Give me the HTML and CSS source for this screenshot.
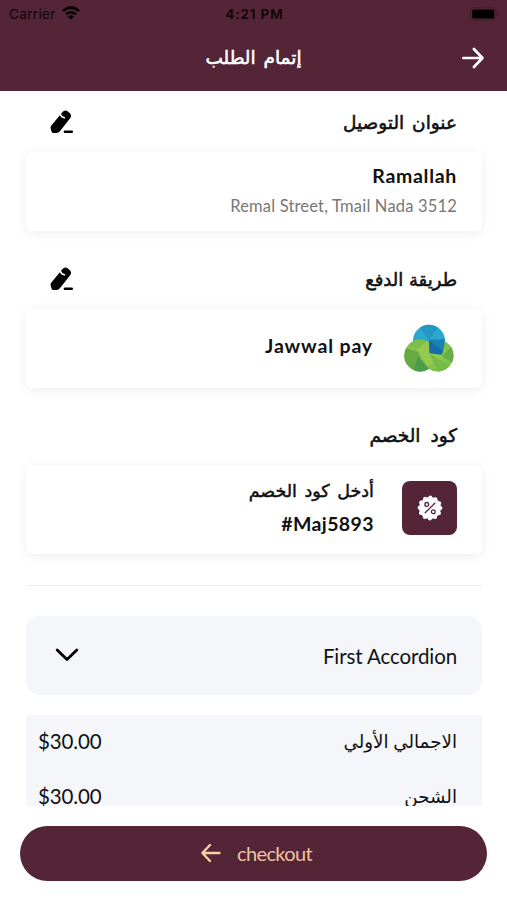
FILE: index.html
```html
<!DOCTYPE html>
<html lang="ar" dir="rtl">
<head>
<meta charset="utf-8">
<title>إتمام الطلب</title>
<link rel="stylesheet" href="styles.css">
</head>
<body>
<div class="screen">
  <header class="header">
    <div class="status" dir="ltr">
      <div class="carrier"><span>Carrier</span>
        <svg width="18" height="14" viewBox="0 0 18 14"><g fill="none" stroke="#000" stroke-width="2.6"><path d="M1 5.1C5.5.5 12.5.5 17 5.1"/><path d="M4 8.4C6.8 5.5 11.2 5.5 14 8.4"/></g><path d="M9 13.6 5.9 10.4Q9 7.9 12.1 10.4Z"/></svg>
      </div>
      <div class="clock">4:21 PM</div>
      <div class="power"><svg width="30" height="14" viewBox="0 0 30 14"><rect x=".5" y=".7" width="25.5" height="12.3" rx="3" fill="none" stroke="#000" stroke-opacity=".2"/><rect x="2.2" y="2.4" width="22" height="9" rx="1.5"/><path d="M27.3 5v4q1.5-.5 1.5-2t-1.5-2Z" fill-opacity=".25"/></svg></div>
    </div>
    <div class="navbar">
      <svg class="forward" width="24" height="24" viewBox="0 0 24 24"><path d="M2.400 12H21.500M12.900 3 21.500 12l-8.600 9" fill="none" stroke="#fff" stroke-width="2.700" stroke-linecap="round" stroke-linejoin="round"/></svg>
      <h1>إتمام الطلب</h1>
      <span class="balance"></span>
    </div>
  </header>
  <main class="content">
    <section>
      <div class="heading"><h2 class="t-address">عنوان التوصيل</h2>
        <svg width="24" height="24" viewBox="0 0 24 24"><path d="M1.400 15.500 12.300 2.200Q14.800-.7 17.900 1.400L19.900 3.200Q22 5.400 20.300 7.900L10.300 20.800Q8.500 23.200 5.900 23L3.200 23.100Q1.600 23 1.300 20.800L.6 18.200Q.4 16.700 1.400 15.500Z"/><path d="M10.300 4.300Q11.300 7.300 14.400 7.800" fill="none" stroke="#fff" stroke-width="1.600" stroke-linecap="round"/><path d="M14.900 21.700h6.900" stroke="#000" stroke-width="2.500" stroke-linecap="round"/></svg>
      </div>
      <div class="card address"><strong class="city">Ramallah</strong><span>Remal Street, Tmail Nada 3512</span></div>
    </section>
    <section>
      <div class="heading"><h2 class="t-payment">طريقة الدفع</h2>
        <svg width="24" height="24" viewBox="0 0 24 24"><path d="M1.400 15.500 12.300 2.200Q14.800-.7 17.900 1.400L19.900 3.200Q22 5.400 20.300 7.900L10.300 20.800Q8.500 23.200 5.900 23L3.200 23.100Q1.600 23 1.300 20.800L.6 18.200Q.4 16.700 1.400 15.500Z"/><path d="M10.300 4.300Q11.300 7.300 14.400 7.800" fill="none" stroke="#fff" stroke-width="1.600" stroke-linecap="round"/><path d="M14.900 21.700h6.900" stroke="#000" stroke-width="2.500" stroke-linecap="round"/></svg>
      </div>
      <div class="card payment">
        <svg width="50" height="49" viewBox="0 0 50 49">
          <defs><clipPath id="lobes"><circle cx="33.500" cy="31.500" r="16"/><circle cx="16.300" cy="31.500" r="16"/></clipPath></defs>
          <circle cx="25" cy="16.700" r="16" fill="#2aa8ce"/>
          <path d="M25 16 16 3.500A16 16 0 0 1 34 3.500Z" fill="#2496c1"/>
          <g clip-path="url(#lobes)">
            <path d="M0 12h50v37H0Z" fill="#82c24b"/>
            <path d="M0 12h26v14L6 22Z" fill="#7bbf4c"/>
            <path d="M0 24 15 28 20 49H0Z" fill="#66aa44"/>
            <path d="M14 32 25 45 18 49H9Z" fill="#4c9c49"/>
            <path d="M13 26 26 14h12v22l-14 6Z" fill="#96ca4e"/>
            <path d="M38 32 50 20v20Z" fill="#67ae49"/>
            <path d="m25 29 23 14-14 6Z" fill="#74bb48"/>
          </g>
          <path d="M25 15.800 40.900 15Q41 23 37.500 30.800L25.500 29Z" fill="#1c82b5"/>
          <path d="m25 16 14 11-1.500 3.800-12-1.800Z" fill="#176da8"/>
        </svg>
        <strong class="provider">Jawwal pay</strong>
      </div>
    </section>
    <section>
      <div class="heading"><h2 class="t-code">كود الخصم</h2></div>
      <div class="card coupon">
        <div class="tile"><svg width="28" height="28" viewBox="-14 -14 28 28"><circle r="10.900" fill="#fff"/><circle r="10.400" fill="none" stroke="#fff" stroke-width="4" stroke-linecap="round" stroke-dasharray="0 5.445"/><g fill="none" stroke="#542437" stroke-width="1.300" stroke-linecap="round"><path d="M-4.800 4.800 4.800-4.800"/><circle cx="-3.200" cy="-3.600" r="1.900"/><circle cx="3.300" cy="3.800" r="1.900"/></g></svg></div>
        <div class="coupon-text"><b>أدخل كود الخصم</b><strong dir="ltr">#Maj5893</strong></div>
      </div>
    </section>
    <hr>
    <div class="accordion"><span>First Accordion</span>
      <svg width="24" height="14" viewBox="0 0 24 14"><path d="M2.200 2 12 11.600 21.800 2" fill="none" stroke="#000" stroke-width="2.800" stroke-linecap="round" stroke-linejoin="round"/></svg>
    </div>
    <div class="totals">
      <div class="row"><span class="t-sub">الاجمالي الأولي</span><span class="price" dir="ltr">$30.00</span></div>
      <div class="row"><span class="t-ship">الشحن</span><span class="price" dir="ltr">$30.00</span></div>
    </div>
  </main>
  <button class="checkout"><span>checkout</span>
    <svg width="20" height="20" viewBox="0 0 20 20"><path d="M18.500 10H1.600M9 2 1.400 10 9 18" fill="none" stroke="#f8d3a5" stroke-width="2.400" stroke-linecap="round" stroke-linejoin="round"/></svg>
  </button>
</div>
</body>
</html>
```
FILE: styles.css
```css
* { box-sizing: border-box; }
body { margin: 0; background: #fff; color: #111; font-family: Lato, "DejaVu Sans", sans-serif; }
h1, h2 { margin: 0; font-weight: 400; white-space: nowrap; font-family: "DejaVu Sans", sans-serif; -webkit-text-stroke: .55px currentColor; }
svg { display: block; flex: none; }
.screen { height: 900px; display: flex; flex-direction: column; overflow: hidden; }
.header { height: 91px; flex: none; background: #542437; }
.status { height: 28px; padding: 0 7px 0 9px; display: grid; grid-template-columns: 1fr auto 1fr; align-items: center; font-family: Inter, sans-serif; font-size: 13.500px; color: #0c0508; }
.carrier { display: flex; align-items: center; gap: 6px; letter-spacing: .35px; }
.carrier svg { margin-top: -2px; }
.clock { font-weight: 600; letter-spacing: .85px; }
.power { justify-self: end; }
.navbar { height: 61px; padding: 0 22px; display: flex; align-items: center; justify-content: space-between; }
.forward { margin-top: -2px; }
.navbar h1 { color: #fff; font-size: 18.500px; word-spacing: 2px; margin-top: -3px; }
.balance { width: 24px; }
.content { height: 715px; flex: none; overflow: hidden; padding: 3px 25px 0 26px; }
.heading { height: 58px; padding: 0 25px 0 23px; display: flex; align-items: center; justify-content: space-between; }
.heading svg { margin: -2px 0 0 1px; }
.heading h2 { font-size: 18.500px; margin-top: -1px; }
.heading .t-address { word-spacing: 2px; }
.heading .t-payment { font-size: 18px; }
.heading .t-code { word-spacing: 4px; }
section { margin-bottom: 20px; }
section:nth-of-type(2) { margin-bottom: 19px; }
section:nth-of-type(3) { margin-bottom: 0; }
.card { height: 79px; border-radius: 6px; background: #fff; box-shadow: 0 2px 12px rgba(0, 0, 0, .075); }
strong { font-weight: 700; font-size: 19.500px; line-height: 24px; white-space: nowrap; letter-spacing: .4px; }
.city { letter-spacing: .7px; margin-left: -1px; }
.provider { letter-spacing: .85px; margin-left: -1px; }
.address { padding: 12px 25px 0; display: flex; flex-direction: column; align-items: flex-start; gap: 7px; }
.address span { color: #777; font-size: 16.500px; line-height: 22px; letter-spacing: .18px; white-space: nowrap; }
.payment { padding: 0 28px; display: flex; align-items: center; gap: 31px; }
.payment strong { margin-top: -5px; }
.coupon { height: 89px; padding: 0 25px; display: flex; align-items: center; gap: 28px; }
.tile { width: 55px; height: 54px; margin-top: -4px; flex: none; display: grid; place-items: center; border-radius: 8px; background: #542437; }
.coupon-text { display: flex; flex-direction: column; align-items: flex-start; gap: 9px; margin-top: -4px; }
.coupon-text b { font-family: "DejaVu Sans", sans-serif; font-weight: 400; -webkit-text-stroke: .5px currentColor; font-size: 17.500px; word-spacing: 2px; line-height: 24px; white-space: nowrap; }
hr { height: 1px; margin: 31px 0 30px; border: 0; background: #ececee; }
.accordion { height: 79px; padding: 0 25px 0 29px; border-radius: 14px; background: #f4f6fa; display: flex; align-items: center; justify-content: space-between; font-size: 20.500px; letter-spacing: -.1px; }
.accordion svg { margin-top: -1px; }
.totals { height: 120px; margin-top: 20px; padding: 0 25px 0 12px; background: #f4f6fa; }
.row { height: 55px; padding-bottom: 4px; display: flex; align-items: center; justify-content: space-between; font-size: 18.300px; white-space: nowrap; }
.row .price { font-size: 20.500px; letter-spacing: -.15px; }
.checkout { width: 467px; height: 55px; margin-top: 20px; flex: none; align-self: center; padding: 0 0 2px 6px; border: 0; border-radius: 28px; background: #542437; color: #f0c3a0; font: 20px Lato, sans-serif; letter-spacing: -.65px; display: flex; align-items: center; justify-content: center; gap: 16px; }
```
